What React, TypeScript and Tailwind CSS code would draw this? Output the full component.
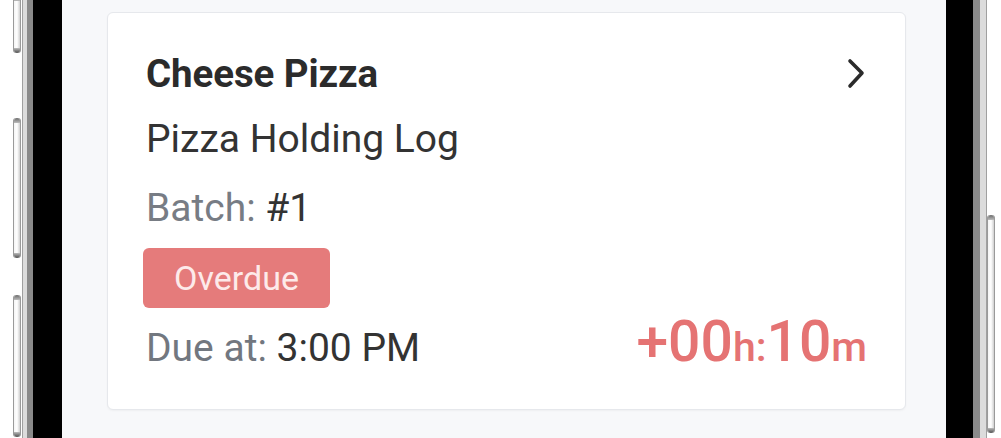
import React from "react";

function SideButton({ h, className = "" }: { h: number; className?: string }) {
  return (
    <div
      className={`w-[8px] rounded-[3px] border-x border-[#9a9a9a] bg-gradient-to-r from-[#f4f4f4] via-[#ffffff] to-[#cfcfcf] flex flex-col justify-between ${className}`}
      style={{ height: h }}
    >
      <div className="h-[5px] rounded-t-[3px] bg-gradient-to-b from-[#6b6b6b] to-[#bdbdbd]" />
      <div className="h-[5px] rounded-b-[3px] bg-gradient-to-b from-[#bdbdbd] to-[#4f4f4f]" />
    </div>
  );
}

export default function App() {
  return (
    <div
      className="w-[1001px] h-[438px] flex bg-white overflow-hidden"
      style={{ fontFamily: "Roboto, 'Noto Sans', sans-serif" }}
    >
      {/* left bezel */}
      <div className="w-[13px] bg-white" />
      <div className="w-[9px] flex flex-col">
        <SideButton h={57} className="-mt-[4px]" />
        <SideButton h={140} className="mt-[65px]" />
        <SideButton h={142} className="mt-[37px]" />
      </div>
      <div className="w-[1px] bg-[#a0a0a0]" />
      <div className="w-[4px] bg-[#dcdcdc]" />
      <div className="w-[6px] bg-[#8a8a8a]" />
      <div className="w-[29px] bg-black" />

      {/* screen */}
      <div className="w-[884px] bg-[#f7f8fa] pl-[45px] pr-[40px] pt-[12px] pb-[28px]">
        <div className="h-[398px] bg-white border border-[#e6e8ec] rounded-[6px] shadow-[0_1px_2px_rgba(0,0,0,0.04)] pl-[38px] pr-[38px] pt-[41px] flex flex-col">
          <div className="flex items-center justify-between">
            <div className="text-[38.5px] leading-[40px] font-bold text-[#2b2b2b] tracking-[-0.1px]">
              Cheese Pizza
            </div>
            <svg width="22" height="34" viewBox="0 0 22 34">
              <polyline
                points="5,4 17,16 5,29"
                fill="none"
                stroke="#2b2b2b"
                strokeWidth="3.6"
                strokeLinecap="round"
                strokeLinejoin="round"
              />
            </svg>
          </div>
          <div className="mt-[25px] text-[39px] leading-[40px] text-[#333333]">
            Pizza Holding Log
          </div>
          <div className="mt-[29px] text-[39px] leading-[40px] text-[#777c84]">
            Batch: <span className="text-[#333333]">#1</span>
          </div>
          <div className="mt-[20px] flex">
            <div className="-ml-[3px] h-[60px] w-[187px] rounded-[6px] bg-[#e57b7b] flex items-center justify-center text-[34px] text-[#fdeaea]">
              Overdue
            </div>
          </div>
          <div className="mt-[6px] flex items-baseline justify-between">
            <div className="text-[39px] leading-[40px] text-[#72777f]">
              Due at: <span className="text-[#333333]">3:00 PM</span>
            </div>
            <div className="font-medium text-[#e57373] leading-[56px] flex items-baseline">
              <span className="text-[57px]">+00</span>
              <span className="text-[41px]">h:</span>
              <span className="text-[57px]">10</span>
              <span className="text-[41px]">m</span>
            </div>
          </div>
        </div>
      </div>

      {/* right bezel */}
      <div className="w-[27px] bg-black" />
      <div className="w-[7px] bg-[#8a8a8a]" />
      <div className="w-[6px] bg-[#dcdcdc]" />
      <div className="w-[1px] bg-[#a0a0a0]" />
      <div className="w-[8px] flex flex-col">
        <SideButton h={218} className="mt-[215px]" />
      </div>
      <div className="flex-1 bg-white" />
    </div>
  );
}
